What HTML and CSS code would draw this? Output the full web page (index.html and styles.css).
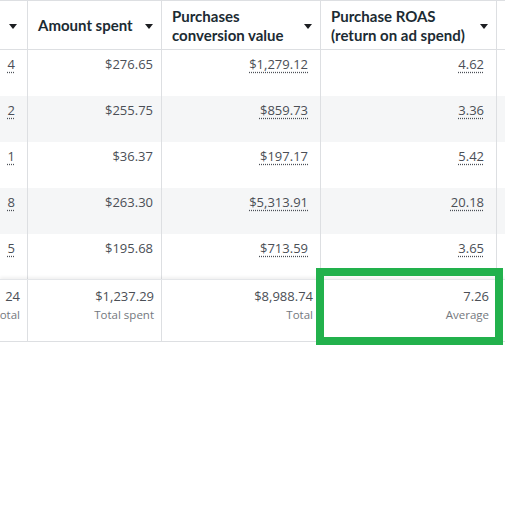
FILE: index.html
```html
<!DOCTYPE html>
<html>
<head>
<meta charset="utf-8">
<link rel="stylesheet" href="styles.css">
</head>
<body>
<div class="page">
  <div class="table">
    <div class="row head">
      <div class="cell"><span class="caret"></span></div>
      <div class="cell"><span class="htext">Amount spent</span><span class="caret"></span></div>
      <div class="cell"><span class="htext">Purchases<br>conversion value</span><span class="caret"></span></div>
      <div class="cell"><span class="htext">Purchase ROAS<br>(return on ad spend)</span><span class="caret"></span></div>
      <div class="cell"></div>
    </div>
    <div class="row">
      <div class="cell num"><span class="link">4</span></div>
      <div class="cell num">$276.65</div>
      <div class="cell num"><span class="link">$1,279.12</span></div>
      <div class="cell num"><span class="link">4.62</span></div>
      <div class="cell"></div>
    </div>
    <div class="row alt">
      <div class="cell num"><span class="link">2</span></div>
      <div class="cell num">$255.75</div>
      <div class="cell num"><span class="link">$859.73</span></div>
      <div class="cell num"><span class="link">3.36</span></div>
      <div class="cell"></div>
    </div>
    <div class="row">
      <div class="cell num"><span class="link">1</span></div>
      <div class="cell num">$36.37</div>
      <div class="cell num"><span class="link">$197.17</span></div>
      <div class="cell num"><span class="link">5.42</span></div>
      <div class="cell"></div>
    </div>
    <div class="row alt">
      <div class="cell num"><span class="link">8</span></div>
      <div class="cell num">$263.30</div>
      <div class="cell num"><span class="link">$5,313.91</span></div>
      <div class="cell num"><span class="link">20.18</span></div>
      <div class="cell"></div>
    </div>
    <div class="row last">
      <div class="cell num"><span class="link">5</span></div>
      <div class="cell num">$195.68</div>
      <div class="cell num"><span class="link">$713.59</span></div>
      <div class="cell num"><span class="link">3.65</span></div>
      <div class="cell"></div>
    </div>
    <div class="row foot">
      <div class="cell tot"><span class="val">24</span><span class="sub">Total</span></div>
      <div class="cell tot"><span class="val">$1,237.29</span><span class="sub">Total spent</span></div>
      <div class="cell tot"><span class="val">$8,988.74</span><span class="sub">Total</span></div>
      <div class="cell tot"><span class="val">7.26</span><span class="sub">Average</span></div>
      <div class="cell"></div>
    </div>
  </div>
  <div class="highlight"></div>
</div>
</body>
</html>
```
FILE: styles.css
```css
html, body {
  margin: 0;
  padding: 0;
  background: #ffffff;
}
.page {
  position: relative;
  width: 505px;
  height: 505px;
  overflow: hidden;
}
.table {
  width: 505px;
  border-top: 1px solid #dddfe2;
  border-bottom: 1px solid #dddfe2;
}
.row {
  display: grid;
  grid-template-columns: 28px 134px 159px 176px 1fr;
  height: 46px;
  background: #ffffff;
}
.row.alt {
  background: #f5f6f7;
}
.cell {
  box-sizing: border-box;
  border-right: 1px solid #dddfe2;
  overflow: hidden;
  white-space: nowrap;
}
.cell:last-child {
  border-right: none;
}
.head {
  height: 49px;
  border-bottom: 1px solid #dddfe2;
  box-sizing: border-box;
}
.head .cell {
  display: flex;
  align-items: center;
  justify-content: space-between;
  padding: 1px 8px 0 10px;
}
.head .cell:first-child {
  justify-content: flex-end;
  padding-right: 10px;
}
.htext {
  font-family: Lato, "Open Sans", sans-serif;
  font-weight: 700;
  font-size: 15px;
  line-height: 19px;
  color: #1c2b33;
}
.caret {
  width: 0;
  height: 0;
  border-left: 4px solid transparent;
  border-right: 4px solid transparent;
  border-top: 5px solid #1c1e21;
  margin-top: 2px;
  flex: none;
}
.num {
  text-align: right;
  padding: 6px 8px 0 0;
  font-family: "Open Sans", "Noto Sans", sans-serif;
  font-size: 13px;
  line-height: 17px;
  color: #4b4f56;
}
.link {
  margin-right: 4px;
  text-decoration: underline dotted #4b4f56;
  text-underline-offset: 3px;
}
.last {
  height: 45px;
}
.foot {
  height: 61px;
  border-top: 1px solid #e4e6e9;
  box-shadow: 0 -2px 3px rgba(0, 0, 0, 0.06);
  position: relative;
}
.tot {
  display: flex;
  flex-direction: column;
  align-items: flex-end;
  padding: 7px 7px 0 0;
  font-family: "Open Sans", "Noto Sans", sans-serif;
}
.val {
  font-size: 13px;
  line-height: 18px;
  color: #4b4f56;
}
.sub {
  font-size: 11.5px;
  line-height: 20px;
  color: #74787e;
}
.highlight {
  position: absolute;
  left: 316px;
  top: 268px;
  width: 187px;
  height: 77px;
  box-sizing: border-box;
  border: 8px solid #22b14c;
}
```
